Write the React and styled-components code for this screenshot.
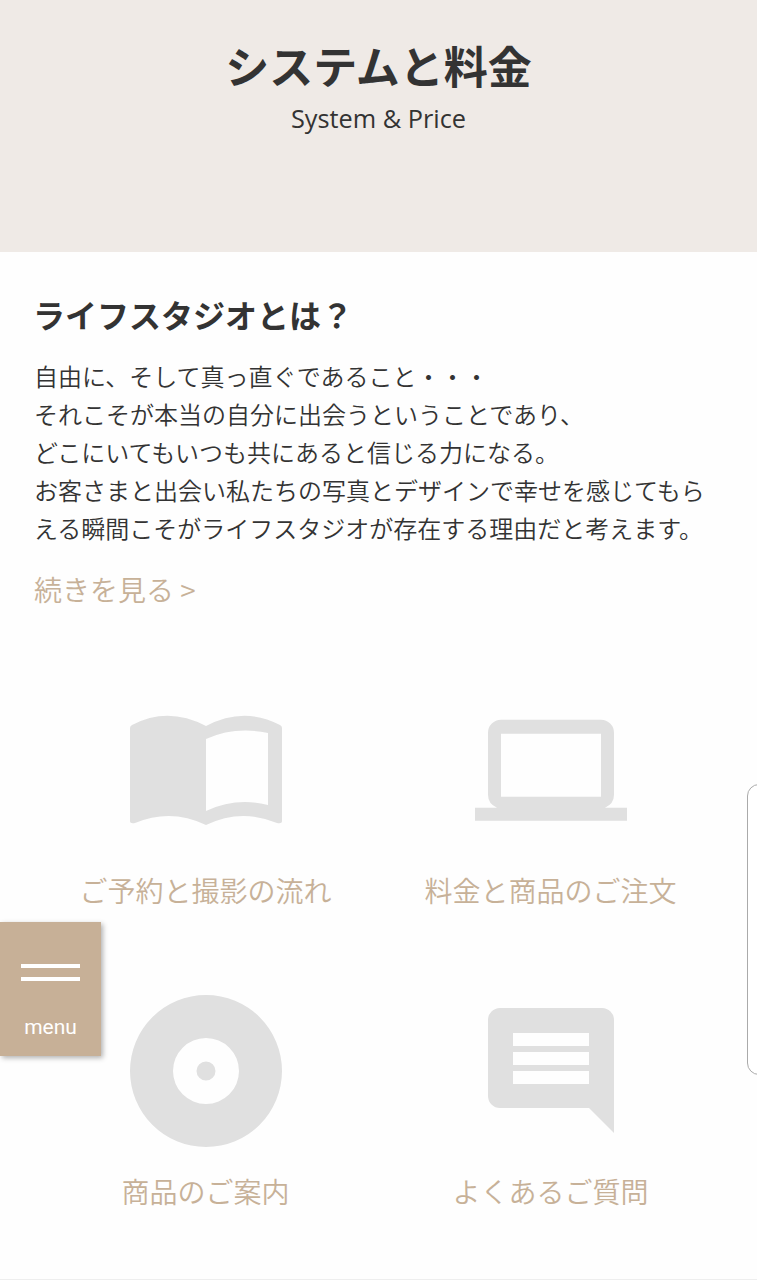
import React from "react";
import styled, { createGlobalStyle } from "styled-components";

const GlobalStyle = createGlobalStyle`
  * {
    box-sizing: border-box;
  }

  body {
    margin: 0;
    background: #fefefe;
    color: #333;
    font-family: "Noto Sans CJK JP", sans-serif;
  }
`;

const Page = styled.div`
  position: relative;
  height: 1280px;
  overflow: hidden;
  border-bottom: 1px solid #eee;
`;

const Hero = styled.header`
  height: 252px;
  padding-top: 32px;
  background: #efeae6;
  text-align: center;
`;

const Title = styled.h1`
  margin: 0;
  font-size: 44px;
  line-height: 66px;
  white-space: nowrap;
`;

const SubTitle = styled.p`
  margin: 0;
  font-family: "Open Sans", sans-serif;
  font-size: 25.3px;
  line-height: 40px;
`;

const Intro = styled.section`
  padding: 37px 34px 0;
`;

const Heading = styled.h2`
  margin: 0 0 0 -1px;
  font-size: 32px;
  line-height: 50px;
`;

const Text = styled.p`
  margin: 18px 0 0;
  font-size: 24px;
  line-height: 38px;
  font-weight: 350;
  white-space: nowrap;
`;

const More = styled.a`
  display: block;
  margin-top: 21px;
  color: #c7b198;
  font-size: 28px;
  line-height: 42px;
  font-weight: 350;
`;

const Grid = styled.nav`
  display: grid;
  grid-template-columns: 345px 345px;
  padding: 84px 0 0 33px;
`;

const Item = styled.a`
  display: flex;
  flex-direction: column;
  align-items: center;
  height: 301px;
  color: #c7b198;
  font-size: 28px;
  font-weight: 350;
  line-height: 42px;
  white-space: nowrap;
`;

const Icon = styled.svg`
  width: 152px;
  height: 152px;
  margin-bottom: 23px;
  fill: #e0e0e0;
`;

const Menu = styled.button`
  position: absolute;
  left: 0;
  top: 922px;
  display: flex;
  flex-direction: column;
  align-items: center;
  width: 101px;
  height: 134px;
  padding: 42px 0 0;
  border: 0;
  background: #c7b097;
  box-shadow: 2px 2px 5px rgba(0, 0, 0, 0.3);
  color: #fff;
  font-family: Roboto, sans-serif;
  font-size: 21px;
  line-height: 24px;
`;

const Bars = styled.span`
  width: 59px;
  height: 17px;
  margin-bottom: 34px;
  border: solid #fff;
  border-width: 4px 0;
`;

const SidePanel = styled.aside`
  position: absolute;
  left: 747px;
  top: 784px;
  width: 40px;
  height: 291px;
  border: 1px solid #aaa;
  border-radius: 12px;
  background: #fff;
`;

const links = [
  {
    label: "ご予約と撮影の流れ",
    path: "M0 12Q0 10 2 9Q38-10 76 10Q114-10 150 9Q152 10 152 12V105Q152 108 147 107Q111 92 76 109Q41 92 5 107Q0 108 0 105ZM76 23V95Q106 81 138 89V17Q105 10 76 23Z",
    box: "0 -22 152 152",
  },
  {
    label: "料金と商品のご注文",
    path: "M26 25H126A13 13 0 0 1 139 38V100Q139 109 130 113H152V126H0V113H22Q13 109 13 100V38A13 13 0 0 1 26 25ZM26 39V102H126V39Z",
    box: "0 -0.8 152 152",
  },
  {
    label: "商品のご案内",
    path: "M76 0A76 76 0 1 0 76 152A76 76 0 1 0 76 0ZM76 43A33 33 0 1 1 76 109A33 33 0 1 1 76 43ZM76 66.500A9.500 9.500 0 1 0 76 85.500A9.500 9.500 0 1 0 76 66.500Z",
    box: "0 0 152 152",
  },
  {
    label: "よくあるご質問",
    path: "M25 13H127A12 12 0 0 1 139 25V138L114 113H25A12 12 0 0 1 13 101V25A12 12 0 0 1 25 13ZM38 38V51H114V38ZM38 57V70H114V57ZM38 76V89H114V76Z",
    box: "0 0 152 152",
  },
];

const App = () => {
  return (
    <Page>
      <GlobalStyle />
      <Hero>
        <Title>システムと料金</Title>
        <SubTitle>System &amp; Price</SubTitle>
      </Hero>
      <Intro>
        <Heading>ライフスタジオとは？</Heading>
        <Text>
          自由に、そして真っ直ぐであること・・・
          <br />
          それこそが本当の自分に出会うということであり、
          <br />
          どこにいてもいつも共にあると信じる力になる。
          <br />
          お客さまと出会い私たちの写真とデザインで幸せを感じてもら
          <br />
          える瞬間こそがライフスタジオが存在する理由だと考えます。
        </Text>
        <More>続きを見る &gt;</More>
      </Intro>
      <Grid>
        {links.map(({ label, path, box }) => (
          <Item key={label}>
            <Icon viewBox={box}>
              <path fillRule="evenodd" d={path} />
            </Icon>
            {label}
          </Item>
        ))}
      </Grid>
      <SidePanel />
      <Menu>
        <Bars />
        menu
      </Menu>
    </Page>
  );
};

export default App;
